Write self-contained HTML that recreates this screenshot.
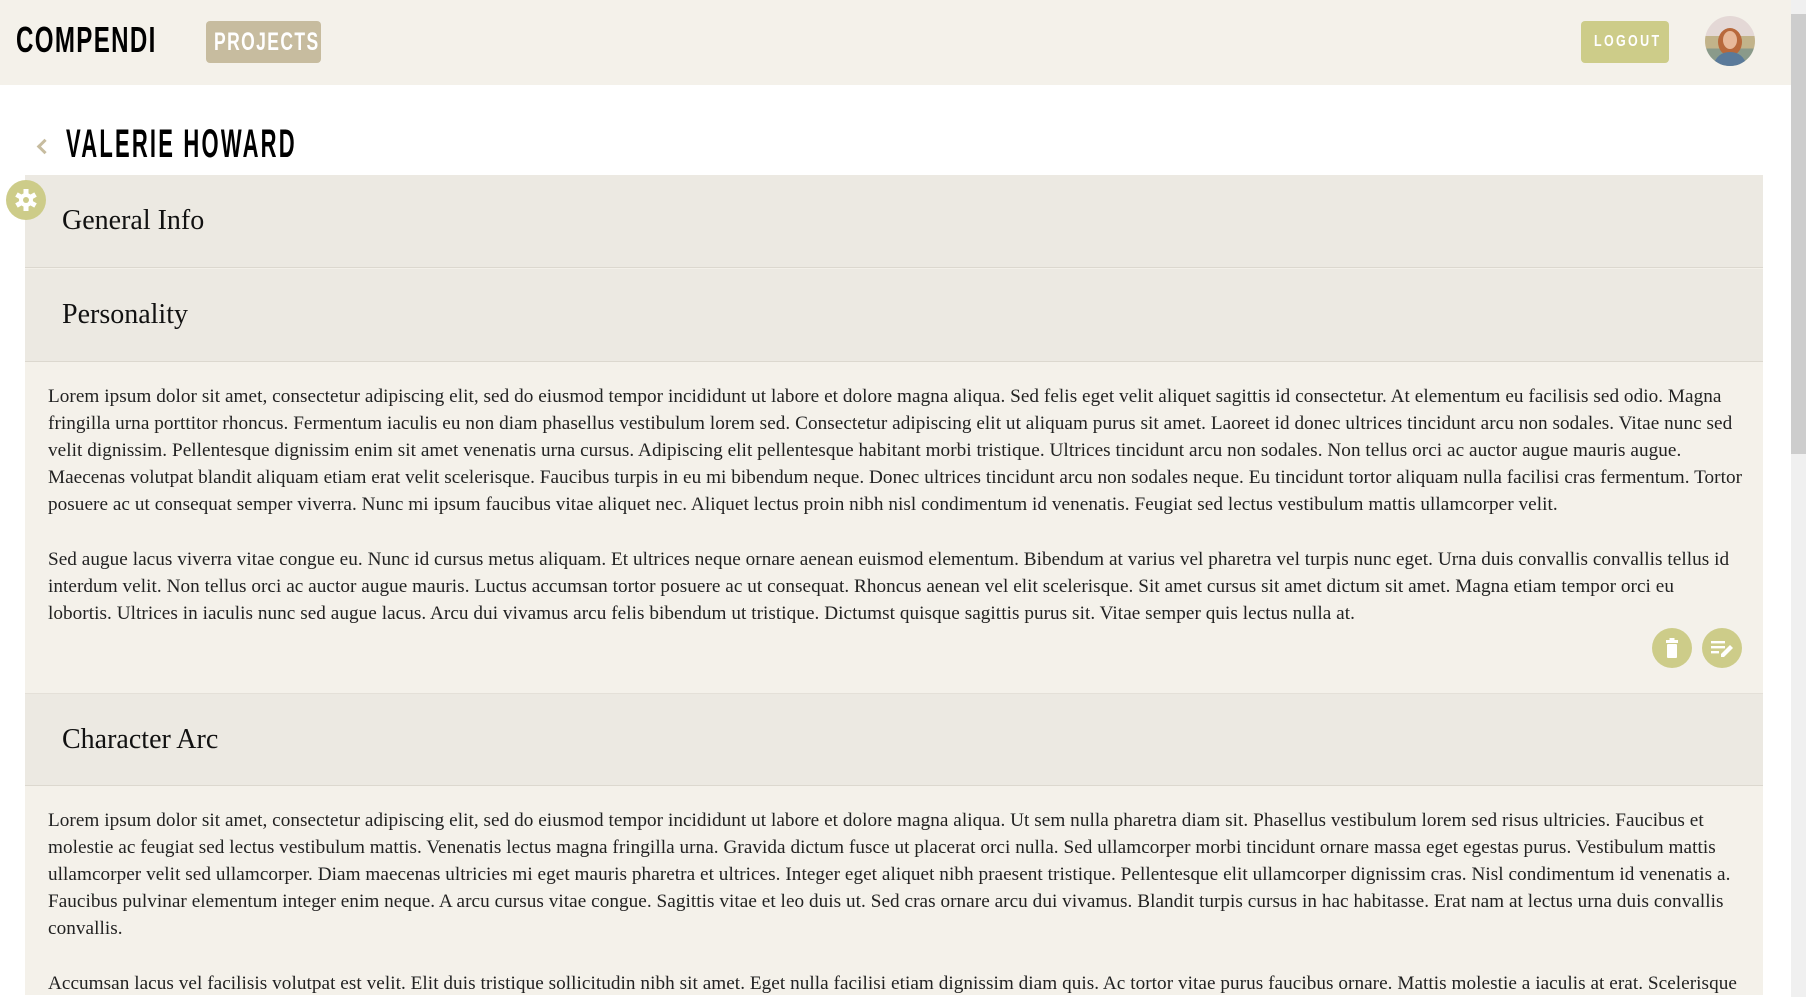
<!DOCTYPE html>
<html><head><meta charset="utf-8"><style>
*{margin:0;padding:0;box-sizing:border-box}
body{width:1806px;height:997px;overflow:hidden;background:#fff;font-family:"Liberation Serif",serif;position:relative}
.hdr{position:absolute;left:0;top:0;width:1791px;height:85px;background:#f4f1ea}
.cond{font-family:"Liberation Sans",sans-serif;font-weight:bold;letter-spacing:2px;white-space:nowrap}
.logo{position:absolute;left:16px;top:19px;font-size:36px;color:#000;transform:scaleX(.67);transform-origin:left}
.proj{position:absolute;left:206px;top:21px;width:115px;height:42px;background:#c7bc9f;border-radius:4px}
.proj span{position:absolute;left:8px;top:0;line-height:42px;color:#fff;font-size:25px;transform:scaleX(.7);transform-origin:left}
.logout{position:absolute;left:1581px;top:21px;width:88px;height:42px;background:#cdcc89;border-radius:4px}
.logout span{position:absolute;left:13px;top:0;line-height:42px;color:#fff;font-size:16px;letter-spacing:3px;transform:scaleX(.78);transform-origin:left}
.av{position:absolute;left:1705px;top:16px;width:50px;height:50px;border-radius:50%;overflow:hidden;background:linear-gradient(#e4d8d6 0 40%,#c2b38a 40% 65%,#8a9a8a 65%)}
.sb{position:absolute;left:1791px;top:0;width:15px;height:997px;background:#f0f0f0}
.sb div{position:absolute;left:0;top:14px;width:15px;height:440px;background:#cdcdcd}
.title{position:absolute;left:66px;top:122px;font-size:40px;color:#000;transform:scaleX(.55);transform-origin:left;letter-spacing:4px}
.chev{position:absolute;left:39px;top:141px;width:11px;height:11px;border-left:3px solid #c7bc9f;border-bottom:3px solid #c7bc9f;transform:rotate(45deg)}
.card{position:absolute;left:25px;width:1738px;background:#f4f1ea}
.h{position:absolute;left:25px;width:1738px;height:93px;background:#ece9e2;border-bottom:1px solid #dcd8cf;font-size:28px;color:#111;padding-left:37px;line-height:91px}
.p{position:absolute;left:48px;font-size:19.2px;line-height:27px;color:#222;white-space:nowrap;letter-spacing:0.05px}
.gear{position:absolute;left:6px;top:180px;width:40px;height:40px;border-radius:50%;background:#cdcc89}
.btn{position:absolute;top:628px;width:40px;height:40px;border-radius:50%;background:#cdcc89}
</style></head><body>
<div class="hdr">
<div class="logo cond">COMPENDI</div>
<div class="proj"><span class="cond">PROJECTS</span></div>
<div class="logout"><span class="cond">LOGOUT</span></div>
<div class="av"><svg width="50" height="50"><ellipse cx="25" cy="26" rx="12" ry="14" fill="#b8693c"/><ellipse cx="25" cy="24" rx="7" ry="9" fill="#e8b99a"/><path d="M8 50 Q12 36 25 36 Q38 36 42 50z" fill="#5a7a9a"/></svg></div>
</div>
<div class="sb"><div></div></div>
<div class="chev"></div>
<div class="title cond">VALERIE HOWARD</div>
<div class="card" style="top:175px;height:820px"></div>
<div class="h" style="top:175px">General Info</div>
<div class="h" style="top:269px">Personality</div>
<div class="gear"><svg width="40" height="40" viewBox="0 0 40 40"><g fill="#fff" transform="translate(20 20)"><circle r="7"/><g id="t"><rect x="-2.5" y="-11" width="5" height="5"/></g><use href="#t" transform="rotate(60)"/><use href="#t" transform="rotate(120)"/><use href="#t" transform="rotate(180)"/><use href="#t" transform="rotate(240)"/><use href="#t" transform="rotate(300)"/></g><circle cx="20" cy="20" r="3" fill="#cdcc89"/></svg></div>
<div class="p" style="top:383px">Lorem ipsum dolor sit amet, consectetur adipiscing elit, sed do eiusmod tempor incididunt ut labore et dolore magna aliqua. Sed felis eget velit aliquet sagittis id consectetur. At elementum eu facilisis sed odio. Magna<br>fringilla urna porttitor rhoncus. Fermentum iaculis eu non diam phasellus vestibulum lorem sed. Consectetur adipiscing elit ut aliquam purus sit amet. Laoreet id donec ultrices tincidunt arcu non sodales. Vitae nunc sed<br>velit dignissim. Pellentesque dignissim enim sit amet venenatis urna cursus. Adipiscing elit pellentesque habitant morbi tristique. Ultrices tincidunt arcu non sodales. Non tellus orci ac auctor augue mauris augue.<br>Maecenas volutpat blandit aliquam etiam erat velit scelerisque. Faucibus turpis in eu mi bibendum neque. Donec ultrices tincidunt arcu non sodales neque. Eu tincidunt tortor aliquam nulla facilisi cras fermentum. Tortor<br>posuere ac ut consequat semper viverra. Nunc mi ipsum faucibus vitae aliquet nec. Aliquet lectus proin nibh nisl condimentum id venenatis. Feugiat sed lectus vestibulum mattis ullamcorper velit.</div>
<div class="p" style="top:546px">Sed augue lacus viverra vitae congue eu. Nunc id cursus metus aliquam. Et ultrices neque ornare aenean euismod elementum. Bibendum at varius vel pharetra vel turpis nunc eget. Urna duis convallis convallis tellus id<br>interdum velit. Non tellus orci ac auctor augue mauris. Luctus accumsan tortor posuere ac ut consequat. Rhoncus aenean vel elit scelerisque. Sit amet cursus sit amet dictum sit amet. Magna etiam tempor orci eu<br>lobortis. Ultrices in iaculis nunc sed augue lacus. Arcu dui vivamus arcu felis bibendum ut tristique. Dictumst quisque sagittis purus sit. Vitae semper quis lectus nulla at.</div>
<div class="btn" style="left:1652px"><svg width="40" height="40"><rect x="14" y="12" width="12" height="3" fill="#fff"/><rect x="17.5" y="10" width="5" height="2" fill="#fff"/><rect x="15" y="16" width="10" height="14" rx="1" fill="#fff"/></svg></div>
<div class="btn" style="left:1702px"><svg width="40" height="40"><g fill="#fff"><rect x="9" y="13" width="14" height="2.4"/><rect x="9" y="18" width="14" height="2.4"/><rect x="9" y="23" width="8" height="2.4"/><path d="M19 29 l0 -3 l9 -9 l3 3 l-9 9z"/></g></svg></div>
<div class="h" style="top:693px;border-top:1px solid #e4e0d8">Character Arc</div>
<div class="p" style="top:807px">Lorem ipsum dolor sit amet, consectetur adipiscing elit, sed do eiusmod tempor incididunt ut labore et dolore magna aliqua. Ut sem nulla pharetra diam sit. Phasellus vestibulum lorem sed risus ultricies. Faucibus et<br>molestie ac feugiat sed lectus vestibulum mattis. Venenatis lectus magna fringilla urna. Gravida dictum fusce ut placerat orci nulla. Sed ullamcorper morbi tincidunt ornare massa eget egestas purus. Vestibulum mattis<br>ullamcorper velit sed ullamcorper. Diam maecenas ultricies mi eget mauris pharetra et ultrices. Integer eget aliquet nibh praesent tristique. Pellentesque elit ullamcorper dignissim cras. Nisl condimentum id venenatis a.<br>Faucibus pulvinar elementum integer enim neque. A arcu cursus vitae congue. Sagittis vitae et leo duis ut. Sed cras ornare arcu dui vivamus. Blandit turpis cursus in hac habitasse. Erat nam at lectus urna duis convallis<br>convallis.</div>
<div class="p" style="top:970px">Accumsan lacus vel facilisis volutpat est velit. Elit duis tristique sollicitudin nibh sit amet. Eget nulla facilisi etiam dignissim diam quis. Ac tortor vitae purus faucibus ornare. Mattis molestie a iaculis at erat. Scelerisque</div>
</body></html>
